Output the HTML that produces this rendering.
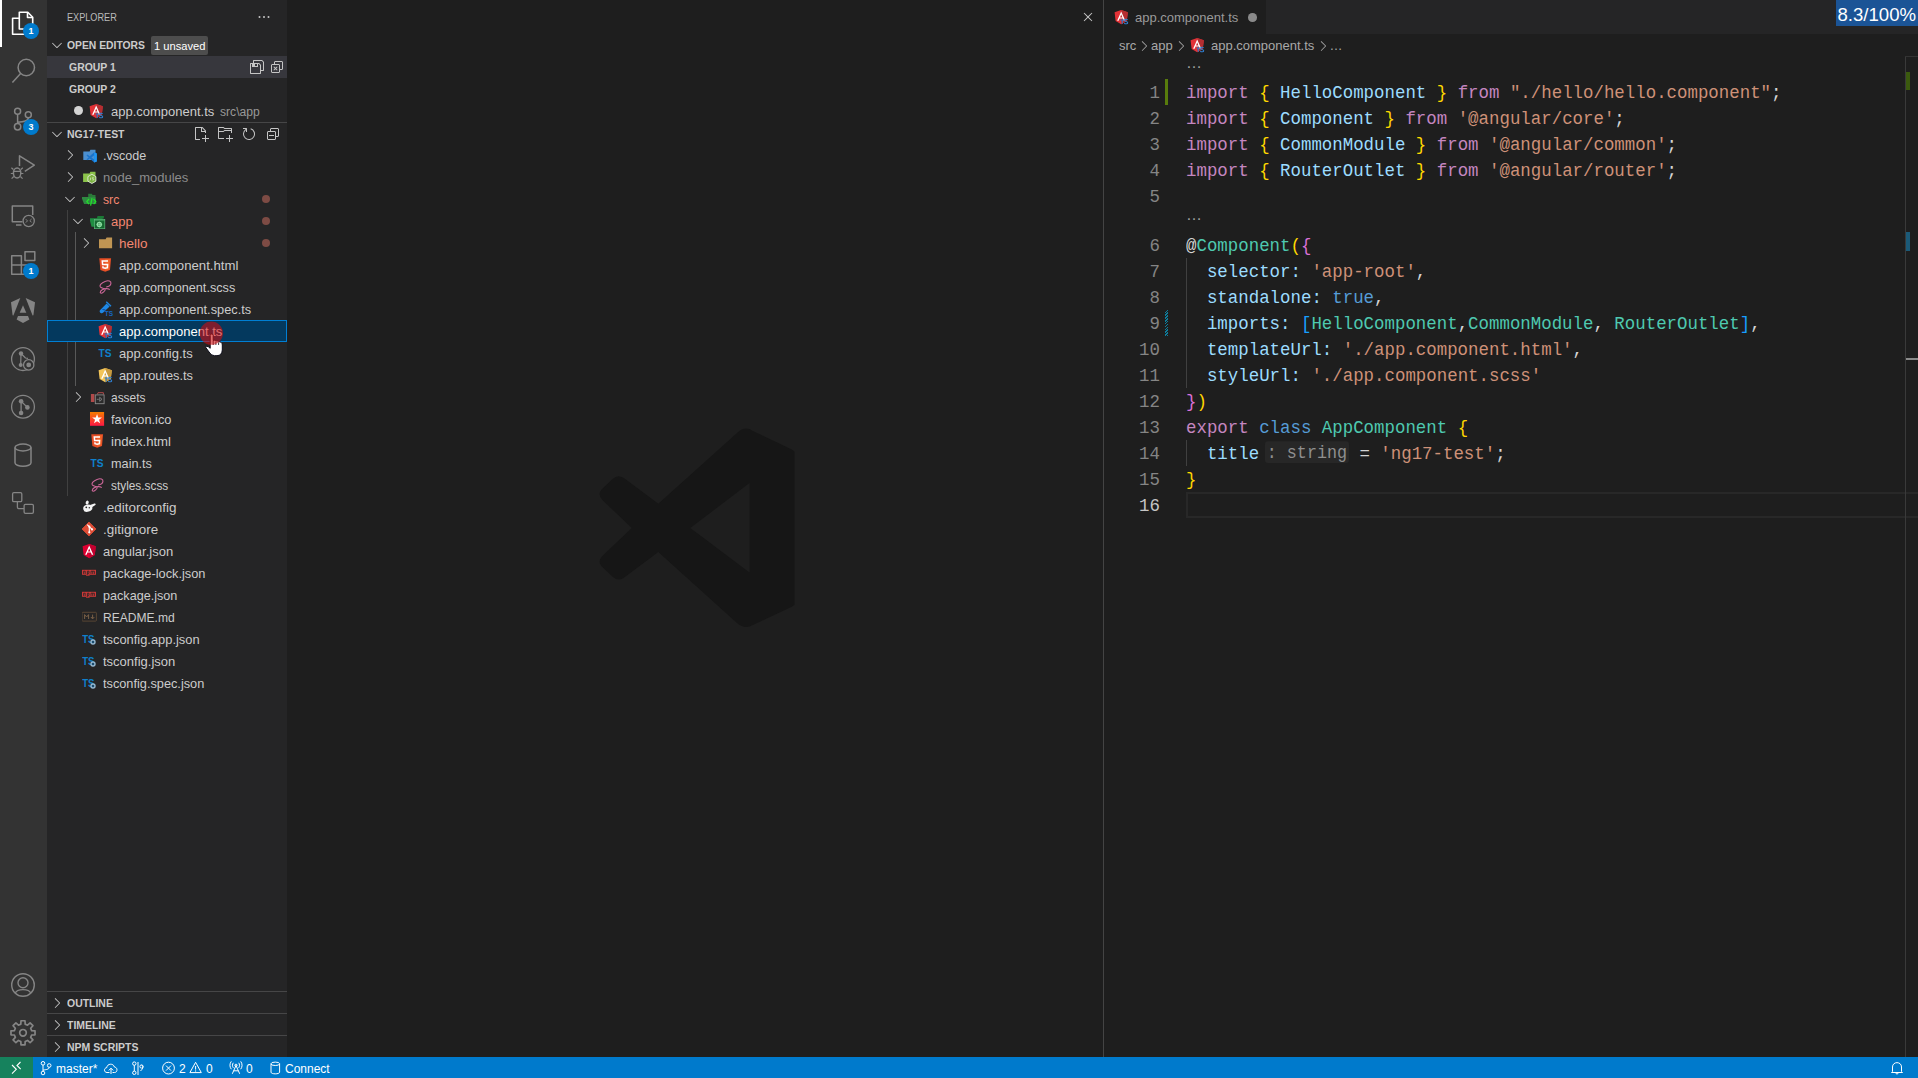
<!DOCTYPE html>
<html>
<head>
<meta charset="utf-8">
<title>app.component.ts - ng17-test - Visual Studio Code</title>
<style>
*{box-sizing:border-box;margin:0;padding:0}
html,body{width:1918px;height:1078px;overflow:hidden;background:#1e1e1e;font-family:"Liberation Sans",sans-serif;font-size:13px;color:#cccccc}
.abs{position:absolute}
#act{position:absolute;left:0;top:0;width:47px;height:1057px;background:#333333}
#side{position:absolute;left:47px;top:0;width:240px;height:1057px;background:#252526;overflow:hidden}
#g1{position:absolute;left:287px;top:0;width:816px;height:1057px;background:#1e1e1e}
#gsep{position:absolute;left:1103px;top:0;width:1px;height:1057px;background:#444444}
#g2{position:absolute;left:1104px;top:0;width:814px;height:1057px;background:#1e1e1e;overflow:hidden}
#status{position:absolute;left:0;top:1057px;width:1918px;height:21px;background:#007acc;color:#fff;font-size:12px}
/* sidebar */
.t{position:absolute;white-space:pre;transform-origin:0 50%;line-height:22px;height:22px}
.hdr{font-size:11px;font-weight:700;color:#cccccc}
.row{position:absolute;left:1px;width:239px;height:22px}
.lbl{position:absolute;top:0;line-height:24px;height:22px;white-space:pre;font-size:13px;color:#cccccc}
.red{color:#f48771}
.ic{position:absolute;top:3px;width:16px;height:16px}
.tw{position:absolute;top:3px;width:16px;height:16px}
.dot{position:absolute;left:213.7px;top:6.7px;width:8.6px;height:8.6px;border-radius:50%;background:#7d4b44}
/* code */
.ln{position:absolute;left:0;width:56px;text-align:right;font-family:"Liberation Mono",monospace;font-size:17.41px;line-height:28px;height:26px;color:#858585;white-space:pre}
.cl{position:absolute;left:82px;font-family:"Liberation Mono",monospace;font-size:17.41px;line-height:28px;height:26px;color:#d4d4d4;white-space:pre}
.cl,.ln{transform:scaleY(1.08);transform-origin:0 10px}
.k{color:#c586c0}.b1{color:#ffd700}.b2{color:#da70d6}.b3{color:#179fff}.v{color:#9cdcfe}.s{color:#ce9178}.c{color:#4ec9b0}.kw{color:#569cd6}
.bc{line-height:22px;height:22px;font-size:13px;color:#a9a9a9;white-space:pre}
.lens{line-height:22px;height:22px;font-family:"Liberation Sans",sans-serif;font-size:16px;color:#a0a0a0;white-space:pre}
.hint{display:inline-block;font-size:16.7px;line-height:21px;height:20px;vertical-align:top;margin:2px 0 0 5.7px;padding:0 2px;background:#272727;color:#8f8f8f;border-radius:3px}
.badge{position:absolute;width:16px;height:16px;border-radius:8px;background:#007acc;color:#fff;font-size:9px;font-weight:700;line-height:16px;text-align:center}
.st{top:0;line-height:25px;height:21px;font-size:12px;color:#fff;white-space:pre}
.dim{color:#8c8c8c}.white{color:#ffffff}
</style>
</head>
<body>
<svg width="0" height="0" style="position:absolute">
<defs>
<linearGradient id="gfav" x1="0" y1="0" x2="0" y2="1"><stop offset="0" stop-color="#f57c00"/><stop offset="1" stop-color="#ff1744"/></linearGradient>
<path id="chev-r" d="M10.072 8.024L5.715 3.667l.618-.62L11 7.716v.618L6.333 13l-.618-.619 4.357-4.357z" stroke="none"/>
<path id="chev-d" d="M7.976 10.072l4.357-4.357.62.618L8.284 11h-.618L3 6.333l.619-.618 4.357 4.357z" stroke="none"/>
<!-- action icons -->
<path id="a-saveall" fill="#c5c5c5" d="M14.85 2.65l-1.5-1.5L13 1H4.48l-.5.5V4H1.5l-.5.5v10l.5.5h10l.5-.5V12h2.5l.5-.5V3l-.15-.35zM11 14H2V5h1v3.07h6V5h.79L11 6.21V14zM6 7V5h2v2H6zm8 4h-2V6l-.15-.35-1.5-1.5L10 4H5V2h7.81l1.19 1.21V11z"/>
<path id="a-closeall" fill="#c5c5c5" fill-rule="evenodd" d="M8.621 8.086l-.707-.707L6.5 8.793 5.086 7.379l-.707.707L5.793 9.500l-1.414 1.414.707.707L6.5 10.207l1.414 1.414.707-.707L7.207 9.500l1.414-1.414z M5 3l1-1h7l1 1v7l-1 1h-2v2l-1 1H3l-1-1V6l1-1h2V3zm1 2h4l1 1v4h2V3H6v2zm4 1H3v7h7V6z"/>
<path id="a-newfile" fill="#c5c5c5" fill-rule="evenodd" d="M9.5 1.100l3.400 3.500.100.400v2h-1V6H8V2H3v11h4v1H2.500l-.500-.500v-12l.500-.500h6.700l.300.100zM9 2v3h2.900L9 2zm4 14h-1v-3H9v-1h3V9h1v3h3v1h-3v3z"/>
<path id="a-newfolder" fill="#c5c5c5" fill-rule="evenodd" d="M14.500 2H7.710l-.850-.850L6.510 1h-5l-.500.500v11l.500.500H7v-1H1.990V6h4.490l.350-.150.860-.860H14v1.500l-.001.510h1.011V2.500L14.500 2zm-.510 2h-6.500l-.350.150-.860.860H2v-3h4.290l.850.850.360.150H14l-.010.990zM13 16h-1v-3H9v-1h3V9h1v3h3v1h-3v3z"/>
<path id="a-refresh" fill="#c5c5c5" fill-rule="evenodd" d="M4.681 3H2V2h3.500l.500.500V6H5V4a5 5 0 1 0 4.530-.761l.302-.954A6 6 0 1 1 4.681 3z"/>
<path id="a-collapse" fill="#c5c5c5" fill-rule="evenodd" d="M9 9H4v1h5V9z M5 3l1-1h7l1 1v7l-1 1h-2v2l-1 1H3l-1-1V6l1-1h2V3zm1 2h4l1 1v4h2V3H6v2zm4 1H3v7h7V6z"/>
<!-- file icons -->
<g id="shield-r"><path d="M7.200 0.900 L0.600 3.200 L1.600 11.900 L7.200 15.300 L12.800 11.900 L13.800 3.200 Z" fill="#dd0031"/><path d="M7.200 0.900 L7.200 15.300 L12.800 11.900 L13.800 3.200 Z" fill="#c3002f"/></g>
<path id="shield-a" d="M7.200 2.500 L3.100 11.700 L4.650 11.700 L5.500 9.600 L8.900 9.600 L9.750 11.700 L11.300 11.700 Z M7.200 5.600 L8.400 8.400 L6.000 8.400 Z" fill="#ffffff" fill-rule="evenodd"/>
<g id="ts-sub" fill="none" stroke="#2f7fd0" stroke-width="1.100"><path d="M6.600 11 L9.800 11 M8.200 11 L8.200 14.800"/><path d="M13.600 10.900 C12.800 9.900 10.600 10 10.600 11.300 C10.600 12.700 13.700 12.200 13.700 13.700 C13.700 15.100 11.200 15.100 10.300 14.100"/></g>
<g id="i-angts"><path d="M7.200 0.900 L0.600 3.200 L1.600 11.900 L7.200 15.300 L12.800 11.900 L13.800 3.200 Z" fill="#e23237"/><path d="M7.200 0.900 L7.200 15.300 L12.800 11.900 L13.800 3.200 Z" fill="#b52e31"/><use href="#shield-a"/><use href="#ts-sub"/></g>
<g id="i-ang"><use href="#shield-r"/><use href="#shield-a"/></g>
<g id="i-route"><path d="M7.200 0.900 L0.600 3.200 L1.600 11.900 L7.200 15.300 L12.800 11.900 L13.800 3.200 Z" fill="#f3c558"/><path d="M7.200 0.900 L7.200 15.300 L12.800 11.900 L13.800 3.200 Z" fill="#c99a3c"/><use href="#shield-a"/><use href="#ts-sub"/></g>
<g id="i-ts"><text x="0.500" y="11.900" font-family="Liberation Sans" font-weight="700" font-size="11" fill="#0f80cc" textLength="13" lengthAdjust="spacingAndGlyphs">TS</text></g>
<g id="i-tsconf"><text x="0.200" y="11.900" font-family="Liberation Sans" font-weight="700" font-size="11" fill="#0f80cc" textLength="12.300" lengthAdjust="spacingAndGlyphs">TS</text><circle cx="11" cy="11" r="2" fill="#252526" stroke="#93b8d2" stroke-width="1.400"/><circle cx="11" cy="11" r="0.800" fill="#0f80cc"/></g>
<g id="i-folder"><path d="M1 4.300 L7.600 4.300 L8.600 2.500 L14.100 2.500 L14.100 13.200 L1 13.200 Z" fill="#c09553"/></g>
<g id="i-vscode"><path d="M1.300 4.400 L7.600 4.400 L8.400 2.700 L13.500 2.700 L13.500 12.900 L1.300 12.900 Z" fill="#4c8fcf"/><path d="M12.200 5.200 L14.800 6.400 L14.800 14.400 L12.200 15.600 L7.700 11.500 L5.500 13.200 L4.500 12.300 L6.700 10.400 L4.500 8.500 L5.500 7.600 L7.700 9.300 Z M12.200 8.300 L9.400 10.400 L12.200 12.500 Z" fill="#1a73cc" fill-rule="evenodd"/><path d="M12.200 5.200 L14.800 6.400 L14.800 14.400 L12.200 15.600 Z" fill="#2196f3"/></g>
<g id="i-node"><path d="M1.100 4.400 L7.600 4.400 L8.400 2.750 L13.500 2.750 L13.500 13 L1.100 13 Z" fill="#8bc34a"/><path d="M9.90 5.30 L13.88 7.60 L13.88 12.20 L9.90 14.50 L5.92 12.20 L5.92 7.60 Z" fill="#7cb342" stroke="#e4ebdc" stroke-width="0.900"/><path d="M8.500 8.600 L8.500 10.900 L7.600 11.300 M10.300 11 L11.800 11 L11.800 10 L10.300 9.700 L10.300 8.700 L11.800 8.700" fill="none" stroke="#cfe3b4" stroke-width="0.800"/></g>
<g id="i-src"><path d="M6.200 2.800 L9.800 2.800 L10.600 4 L13.500 4 L13.500 6.400 L6.200 6.400 Z" fill="#2a7a38"/><path d="M-0.700 6.100 L13.500 6.100 L14.400 13 L2.100 13 Z" fill="#2f8a41"/><path d="M7 8 L4.800 10.600 L7 13.200 M11.600 8 L13.800 10.600 L11.600 13.200 M10 7.200 L8.600 14.600" fill="none" stroke="#22e02a" stroke-width="1.200"/></g>
<g id="i-app"><path d="M7.500 2.900 L13.900 2.900 L13.900 5.600 L6.800 5.600 Z" fill="#1b7a35"/><path d="M-0.600 5.300 L12.600 5.300 L13.300 13.700 L1.500 13.700 Z" fill="#1f8f42"/><rect x="4.400" y="6.500" width="10.400" height="9.200" fill="#14672f" stroke="#5fba7d" stroke-width="0.700"/><path d="M4.400 7.600 L14.800 7.600" stroke="#5fba7d" stroke-width="0.500"/><circle cx="9.300" cy="11.500" r="2" fill="none" stroke="#8fe0a5" stroke-width="1.300"/><path d="M9.300 8.600 L9.300 14.400 M6.400 11.500 L12.200 11.500" stroke="#8fe0a5" stroke-width="0.700"/></g>
<g id="i-assets"><path d="M0.900 5 L0.900 13 L4.400 13 L4.400 5 Z" fill="#b04a4a"/><path d="M7.400 5.400 L8 3.700 L13.400 3.700 L13.400 5.600" fill="none" stroke="#b04a4a" stroke-width="1"/><rect x="5.300" y="5.900" width="8.800" height="8.800" fill="#2b2b2b" stroke="#8a8a8a" stroke-width="0.900"/><path d="M6.800 10.300 L8.800 10.300 M9.700 8.300 L12 10.300 L9.700 12.300 Z" fill="none" stroke="#9a9a9a" stroke-width="0.700"/></g>
<g id="i-html"><path d="M1.300 1.300 L13.100 1.300 L12 13 L7.200 14.800 L2.400 13 Z" fill="#e44d26"/><path d="M7.200 2.300 L12 2.300 L11.100 12.200 L7.200 13.700 Z" fill="#f16529"/><path d="M10 4 L4.300 4 L4.600 7.600 L9.600 7.600 L9.400 10.600 L7.200 11.300 L5 10.600 L4.900 9.300" fill="none" stroke="#ffffff" stroke-width="1.500"/></g>
<g id="i-scss"><path d="M8.200 8 C10.400 7.700 12.600 6.300 12.900 4.600 C13.400 2.200 10.400 1 7.600 2.200 C4.600 3.400 1.400 5.800 2.200 7.800 C2.900 9.400 6 9 7.200 10.200 C8 11.200 6.200 12.200 5 13.400 C3.900 14.600 2.200 14.600 2.300 13.200 C2.500 11.400 5.400 9.800 8 9.600 C9.800 9.500 11.400 9.800 11.600 10.800" fill="none" stroke="#cd6799" stroke-width="1.100"/></g>
<g id="i-spec"><path d="M8.300 0.800 L13 5.300" stroke="#1e88e5" stroke-width="1.300" fill="none"/><path d="M8.600 2.400 L11.600 5.400 L5 11.800 C3.600 13.200 0.400 11 2.200 8.900 Z" fill="#1e88e5"/><path d="M4.500 8.500 L7.500 9" stroke="#0d47a1" stroke-width="1" fill="none"/><text x="6.800" y="15" font-family="Liberation Sans" font-weight="700" font-size="6.500" fill="#1565c0">TS</text></g>
<g id="i-fav"><rect x="0" y="1" width="14.100" height="13.800" fill="url(#gfav)"/><path d="M7.05 2.90 L8.28 6.40 L12.00 6.49 L9.05 8.75 L10.11 12.31 L7.05 10.20 L3.99 12.31 L5.05 8.75 L2.10 6.49 L5.82 6.40 Z" fill="#ffffff"/></g>
<g id="i-editorconfig" fill="#f4f4f4"><ellipse cx="5.800" cy="9.200" rx="4.600" ry="3.500" transform="rotate(-15 5.800 9.200)"/><path d="M8 6 L12.400 4.600 C13.800 4.300 14.200 5.600 13 6.300 L9.600 8.600 Z"/><ellipse cx="5.200" cy="3.600" rx="1.500" ry="2.100" transform="rotate(20 5.200 3.600)"/><circle cx="4.300" cy="8.300" r="0.900" fill="#252526"/><circle cx="7.300" cy="8.700" r="0.700" fill="#252526"/></g>
<g id="i-git"><path d="M7 1 L14 8 L7 15 L0 8 Z" fill="#dd4c35" stroke="#dd4c35" stroke-width="0.800" stroke-linejoin="round"/><path d="M5.200 3.600 L7.300 5.700 L7.300 11.500 M7.300 5.700 L10 8.400" fill="none" stroke="#ffffff" stroke-width="1.100"/><circle cx="7.300" cy="5.700" r="1.100" fill="#fff"/><circle cx="7.300" cy="11.300" r="1.100" fill="#fff"/><circle cx="10" cy="8.400" r="1.100" fill="#fff"/></g>
<g id="i-npm"><rect x="0" y="4.800" width="14" height="5" fill="#cb3837"/><rect x="4" y="9.800" width="3.600" height="0.900" fill="#cb3837"/><path d="M1.600 8.900 L1.600 6.200 L3.200 6.200 L3.200 8.900 M5.400 9.800 L5.400 6.200 L7 6.200 L7 8.300 L5.400 8.300 M9 8.900 L9 6.200 L12.400 6.200 L12.400 8.900 M10.700 6.200 L10.700 8.900" fill="none" stroke="#252526" stroke-width="0.800"/></g>
<g id="i-md"><rect x="0" y="3.300" width="14.400" height="8.800" rx="0.800" fill="none" stroke="#5e4a36" stroke-width="0.900"/><path d="M2.600 10 L2.600 5.600 L4.600 8 L6.600 5.600 L6.600 10 M10.600 5.600 L10.600 9.600 M8.900 8 L10.600 9.900 L12.300 8" fill="none" stroke="#7a6047" stroke-width="1"/></g>
<!-- status icons -->
<g id="s-branch" fill="none" stroke="#ffffff" stroke-width="1"><circle cx="5" cy="3.300" r="1.800"/><circle cx="5" cy="13" r="1.800"/><circle cx="11.200" cy="5.500" r="1.800"/><path d="M5 5.100 L5 11.200 M11.200 7.300 C11.200 9.500 8 9.500 5 10.200"/></g>
<g id="s-cloud" fill="none" stroke="#ffffff" stroke-width="1"><path d="M6.500 12.500 L4 12.500 C0.800 12.500 0.600 8 3.800 7.600 C4 3.400 10.600 3 11.400 7 C14.800 7.200 14.800 12.500 11.600 12.500 L9.500 12.500"/><path d="M8 14 L8 8.300 M5.800 10.400 L8 8.200 L10.200 10.400"/></g>
<g id="s-gitcompare" fill="none" stroke="#ffffff" stroke-width="1"><circle cx="4.300" cy="3.600" r="1.700"/><circle cx="4.300" cy="12.800" r="1.700"/><path d="M4.300 5.300 L4.300 11.100 M8 2 L8 15"/><path d="M11.500 5.300 C13.300 5.300 13.300 8 12 9.300 L10.500 11"/><circle cx="11.500" cy="6.500" r="1.600"/></g>
<g id="s-error" fill="none" stroke="#ffffff" stroke-width="1"><circle cx="8.500" cy="8.100" r="5.900"/><path d="M6 5.600 L11 10.600 M11 5.600 L6 10.600"/></g>
<g id="s-warn" fill="none" stroke="#ffffff" stroke-width="1"><path d="M7.600 2.300 L13.300 12.600 L1.900 12.600 Z"/><path d="M7.600 6 L7.600 9.600 M7.600 10.400 L7.600 11.600"/></g>
<g id="s-radio" fill="none" stroke="#ffffff" stroke-width="1"><path d="M4.300 13.800 L8 5.500 L11.700 13.800 M5.700 10.800 L10.300 10.800"/><circle cx="8" cy="5.300" r="1.100"/><path d="M5.300 2.800 C4.200 4.200 4.200 6.400 5.300 7.800 M10.700 2.800 C11.800 4.200 11.800 6.400 10.700 7.800 M3.300 1.400 C1.500 3.600 1.500 7 3.300 9.200 M12.700 1.400 C14.500 3.600 14.500 7 12.700 9.200"/></g>
<g id="s-db" fill="none" stroke="#ffffff" stroke-width="1"><ellipse cx="8.300" cy="3.800" rx="4.300" ry="1.700"/><path d="M4 3.800 L4 12.200 C4 14.400 12.600 14.400 12.600 12.200 L12.600 3.800"/></g>
<g id="s-bell" fill="none" stroke="#ffffff" stroke-width="1"><path d="M3.500 11.500 L3.500 7 C3.500 1.200 12.500 1.200 12.500 7 L12.500 11.500 L13.500 12.500 L2.500 12.500 Z"/><path d="M6.800 12.700 C6.800 14.500 9.200 14.500 9.200 12.700"/></g>
</defs>
</svg>
<div id="act">
  <div class="abs" style="left:0;top:0;width:1.6px;height:47px;background:#ffffff"></div>
  <svg class="abs" style="left:0;top:0" width="48" height="1057" viewBox="0 0 48 1057" fill="none" stroke="#858585" stroke-width="1.5" stroke-linejoin="round" stroke-linecap="butt">
    <!-- files (active) -->
    <g stroke="#ffffff" stroke-width="1.6">
      <path d="M19.3 29 L19.3 12.3 L27.8 12.3 L32.7 17.2 L32.7 29 Z"/>
      <path d="M27.5 12.5 L27.5 17.5 L32.5 17.5"/>
      <path d="M19 18.3 L12.6 18.3 L12.6 34.3 L25.8 34.3 L25.8 29.3"/>
    </g>
    <!-- search -->
    <circle cx="26.3" cy="67.5" r="8.2"/>
    <path d="M20.6 73.6 L12.4 82.6"/>
    <!-- scm -->
    <circle cx="17.6" cy="111.3" r="3"/>
    <circle cx="28.3" cy="114.8" r="3"/>
    <circle cx="17.6" cy="126.7" r="3.2"/>
    <path d="M17.6 114.3 L17.6 123.5 M28.3 117.8 C28.3 121.5 24 122 17.6 122.3"/>
    <!-- debug -->
    <path d="M19.5 166 L19.5 155.8 L34.3 165.2 L24.8 171.3"/>
    <ellipse cx="17.1" cy="173" rx="3.7" ry="5"/>
    <path d="M13.4 171.3 L20.8 171.3 M13.4 169.5 L11.4 167.8 M20.8 169.5 L22.8 167.8 M13.4 173.5 L10.8 173.5 M20.8 173.5 L23.4 173.5 M13.8 176.5 L11.6 178.6 M20.4 176.5 L22.6 178.6" stroke-width="1.2"/>
    <!-- remote explorer -->
    <path d="M22.5 221.7 L12.3 221.7 L12.3 205.9 L32.7 205.9 L32.7 215"/>
    <path d="M16 225 L21.5 225"/>
    <circle cx="28.7" cy="221" r="5.6" stroke-width="1.3"/>
    <path d="M25.8 219.2 L27.5 220.9 L25.8 222.6 M31.6 219 L29.9 220.7 L31.6 222.4" stroke-width="1"/>
    <!-- extensions -->
    <path d="M21.4 265 L21.4 255.7 L11.7 255.7 L11.7 274.3 L31 274.3 L31 265 L11.7 265 M21.4 265 L21.4 274.3"/>
    <rect x="25" y="251.8" width="9.8" height="8.8"/>
    <!-- angular -->
    <g stroke="none" fill="#858585">
      <path d="M11 302.300 L20.300 298 L13.400 315.600 L12.600 315.200 Z"/>
      <path d="M35 302.300 L25.700 298 L32.600 315.600 L33.400 315.200 Z"/>
      <path d="M23 305.200 L19.700 312.800 L26.300 312.800 Z"/>
      <path d="M18 316 L28 316 L29.400 319.400 L23 323 L16.600 319.400 Z"/>
    </g>
    <!-- git graph -->
    <circle cx="23" cy="359.1" r="11.4" stroke-width="1.3"/>
    <circle cx="21" cy="353.5" r="2.2" fill="#858585" stroke="none"/>
    <circle cx="20.7" cy="364.9" r="2" fill="#858585" stroke="none"/>
    <path d="M21 353.5 L20.7 364.9 M21 353.5 L25.5 358 L28 358.3" stroke-width="1.2"/>
    <circle cx="28.7" cy="364.9" r="5.2" fill="#333333" stroke-width="1.3"/>
    <circle cx="28.7" cy="364.9" r="2.4" fill="#858585" stroke="none"/>
    <!-- git -->
    <circle cx="23" cy="406.7" r="11.4" stroke-width="1.3"/>
    <circle cx="21.1" cy="401.3" r="2.3" fill="#858585" stroke="none"/>
    <circle cx="21.1" cy="413" r="2.3" fill="#858585" stroke="none"/>
    <circle cx="27.4" cy="407.4" r="2.3" fill="#858585" stroke="none"/>
    <path d="M21.1 401.3 L21.1 413 M21.1 401.3 L27.4 407.4" stroke-width="1.3"/>
    <!-- database -->
    <ellipse cx="23" cy="447.5" rx="8" ry="3.4"/>
    <path d="M15 447.5 L15 462.8 A8 3.4 0 0 0 31 462.8 L31 447.5"/>
    <!-- squares -->
    <rect x="12.6" y="492.7" width="9.2" height="9" rx="1.3" stroke-width="1.3"/>
    <rect x="24.1" y="504.4" width="9.3" height="9" rx="1.3" stroke-width="1.3"/>
    <path d="M17.4 501.8 L17.4 507.3 Q17.4 508.7 18.8 508.7 L24 508.7" stroke-width="1.3"/>
    <!-- account -->
    <circle cx="23" cy="985" r="11.3" stroke-width="1.4"/>
    <circle cx="23" cy="982.7" r="5" stroke-width="1.4"/>
    <path d="M15.3 993 C17 988.5 29 988.5 30.7 993" stroke-width="1.4"/>
    <!-- gear -->
    <g transform="translate(23 1032.8)" stroke-width="1.7">
      <circle cx="0" cy="0" r="3.3"/>
      <path d="M-2.20 -8.62 L-2.00 -12.03 L2.00 -12.03 L2.20 -8.62 L4.54 -7.65 L7.09 -9.93 L9.93 -7.09 L7.65 -4.54 L8.62 -2.20 L12.03 -2.00 L12.03 2.00 L8.62 2.20 L7.65 4.54 L9.93 7.09 L7.09 9.93 L4.54 7.65 L2.20 8.62 L2.00 12.03 L-2.00 12.03 L-2.20 8.62 L-4.54 7.65 L-7.09 9.93 L-9.93 7.09 L-7.65 4.54 L-8.62 2.20 L-12.03 2.00 L-12.03 -2.00 L-8.62 -2.20 L-7.65 -4.54 L-9.93 -7.09 L-7.09 -9.93 L-4.54 -7.65 Z"/>
    </g>
  </svg>
  <div class="badge" style="left:23px;top:23px">1</div>
  <div class="badge" style="left:23px;top:119px">3</div>
  <div class="badge" style="left:23px;top:263px">1</div>
</div>
<div id="side"><div class="abs" style="left:1px;top:0;width:239px;height:1057px">
<div class="t" style="left:19px;top:6px;font-size:11px;color:#bbbbbb;transform:scaleX(0.83)">EXPLORER</div>
<svg class="abs" style="left:208px;top:9px" width="16" height="16" viewBox="0 0 16 16"><circle cx="3.5" cy="8" r="1" fill="#c5c5c5"/><circle cx="8" cy="8" r="1" fill="#c5c5c5"/><circle cx="12.5" cy="8" r="1" fill="#c5c5c5"/></svg>
<svg class="abs" style="left:1px;top:37px" width="16" height="16" viewBox="0 0 16 16"><use href="#chev-d" fill="#c5c5c5"/></svg>
<div class="t hdr" style="left:19px;top:34px;transform:scaleX(0.94)">OPEN EDITORS</div>
<div class="abs" style="left:103px;top:36px;width:57px;height:19px;background:#4d4d4d;border-radius:2px"></div>
<div class="t" style="left:106px;top:35px;font-size:11px;color:#ffffff;transform:scaleX(1.015)">1 unsaved</div>
<div class="abs" style="left:-1px;top:56px;width:240px;height:22px;background:#37373d"></div>
<div class="t hdr" style="left:21px;top:56px;transform:scaleX(0.95)">GROUP 1</div>
<svg class="abs" style="left:201px;top:59px" width="16" height="16" viewBox="0 0 16 16"><use href="#a-saveall"/></svg>
<svg class="abs" style="left:221px;top:59px" width="16" height="16" viewBox="0 0 16 16"><use href="#a-closeall"/></svg>
<div class="t hdr" style="left:21px;top:78px;transform:scaleX(0.95)">GROUP 2</div>
<div class="abs" style="left:26px;top:106px;width:9px;height:9px;border-radius:50%;background:#d4d4d4"></div>
<svg class="abs" style="left:41px;top:103px" width="16" height="16" viewBox="0 0 16 16"><use href="#i-angts"/></svg>
<div class="lbl" style="left:63px;top:100px">app.component.ts</div>
<div class="lbl" style="left:172px;top:100px;font-size:12px;color:#999999;line-height:25px;transform:scaleX(1.01);transform-origin:0 50%">src\app</div>
<div class="abs" style="left:-1px;top:122px;width:240px;height:1px;background:#464647"></div>
<svg class="abs" style="left:1px;top:126px" width="16" height="16" viewBox="0 0 16 16"><use href="#chev-d" fill="#c5c5c5"/></svg>
<div class="t hdr" style="left:19px;top:123px;transform:scaleX(0.95)">NG17-TEST</div>
<svg class="abs" style="left:145px;top:126px" width="16" height="16" viewBox="0 0 16 16"><use href="#a-newfile"/></svg>
<svg class="abs" style="left:169px;top:126px" width="16" height="16" viewBox="0 0 16 16"><use href="#a-newfolder"/></svg>
<svg class="abs" style="left:193px;top:126px" width="16" height="16" viewBox="0 0 16 16"><use href="#a-refresh"/></svg>
<svg class="abs" style="left:217px;top:126px" width="16" height="16" viewBox="0 0 16 16"><use href="#a-collapse"/></svg>
<div class="abs" style="left:19px;top:210px;width:1px;height:286px;background:#404040"></div>
<div class="abs" style="left:27px;top:232px;width:1px;height:154px;background:#585858"></div>
</div>
<div class="row" style="top:144px"><svg class="tw" style="left:14px" viewBox="0 0 16 16"><use href="#chev-r" fill="#c5c5c5"/></svg><svg class="ic" style="left:34px" viewBox="0 0 16 16"><use href="#i-vscode"/></svg><div class="lbl " style="left:55px;transform:scaleX(0.966);transform-origin:0 50%">.vscode</div></div>
<div class="row" style="top:166px"><svg class="tw" style="left:14px" viewBox="0 0 16 16"><use href="#chev-r" fill="#c5c5c5"/></svg><svg class="ic" style="left:34px" viewBox="0 0 16 16"><use href="#i-node"/></svg><div class="lbl dim" style="left:55px">node_modules</div></div>
<div class="row" style="top:188px"><svg class="tw" style="left:14px" viewBox="0 0 16 16"><use href="#chev-d" fill="#c5c5c5"/></svg><svg class="ic" style="left:34px" viewBox="0 0 16 16"><use href="#i-src"/></svg><div class="lbl red" style="left:55px;transform:scaleX(0.94);transform-origin:0 50%">src</div><div class="dot"></div></div>
<div class="row" style="top:210px"><svg class="tw" style="left:22px" viewBox="0 0 16 16"><use href="#chev-d" fill="#c5c5c5"/></svg><svg class="ic" style="left:42px" viewBox="0 0 16 16"><use href="#i-app"/></svg><div class="lbl red" style="left:63px">app</div><div class="dot"></div></div>
<div class="row" style="top:232px"><svg class="tw" style="left:30px" viewBox="0 0 16 16"><use href="#chev-r" fill="#c5c5c5"/></svg><svg class="ic" style="left:50px" viewBox="0 0 16 16"><use href="#i-folder"/></svg><div class="lbl red" style="left:71px;transform:scaleX(1.037);transform-origin:0 50%">hello</div><div class="dot"></div></div>
<div class="row" style="top:254px"><svg class="ic" style="left:50px" viewBox="0 0 16 16"><use href="#i-html"/></svg><div class="lbl " style="left:71px;transform:scaleX(1.013);transform-origin:0 50%">app.component.html</div></div>
<div class="row" style="top:276px"><svg class="ic" style="left:50px" viewBox="0 0 16 16"><use href="#i-scss"/></svg><div class="lbl " style="left:71px;transform:scaleX(0.975);transform-origin:0 50%">app.component.scss</div></div>
<div class="row" style="top:298px"><svg class="ic" style="left:50px" viewBox="0 0 16 16"><use href="#i-spec"/></svg><div class="lbl " style="left:71px;transform:scaleX(0.983);transform-origin:0 50%">app.component.spec.ts</div></div>
<div class="abs" style="left:0;top:320px;width:240px;height:22px;background:#04395e;border:1px solid #007fd4"></div>
<div class="row" style="top:320px"><svg class="ic" style="left:50px" viewBox="0 0 16 16"><use href="#i-angts"/></svg><div class="lbl white" style="left:71px">app.component.ts</div></div>
<div class="row" style="top:342px"><svg class="ic" style="left:50px" viewBox="0 0 16 16"><use href="#i-ts"/></svg><div class="lbl " style="left:71px">app.config.ts</div></div>
<div class="row" style="top:364px"><svg class="ic" style="left:50px" viewBox="0 0 16 16"><use href="#i-route"/></svg><div class="lbl " style="left:71px;transform:scaleX(0.983);transform-origin:0 50%">app.routes.ts</div></div>
<div class="row" style="top:386px"><svg class="tw" style="left:22px" viewBox="0 0 16 16"><use href="#chev-r" fill="#c5c5c5"/></svg><svg class="ic" style="left:42px" viewBox="0 0 16 16"><use href="#i-assets"/></svg><div class="lbl " style="left:63px;transform:scaleX(0.918);transform-origin:0 50%">assets</div></div>
<div class="row" style="top:408px"><svg class="ic" style="left:42px" viewBox="0 0 16 16"><use href="#i-fav"/></svg><div class="lbl " style="left:63px;transform:scaleX(0.983);transform-origin:0 50%">favicon.ico</div></div>
<div class="row" style="top:430px"><svg class="ic" style="left:42px" viewBox="0 0 16 16"><use href="#i-html"/></svg><div class="lbl " style="left:63px;transform:scaleX(1.013);transform-origin:0 50%">index.html</div></div>
<div class="row" style="top:452px"><svg class="ic" style="left:42px" viewBox="0 0 16 16"><use href="#i-ts"/></svg><div class="lbl " style="left:63px;transform:scaleX(0.976);transform-origin:0 50%">main.ts</div></div>
<div class="row" style="top:474px"><svg class="ic" style="left:42px" viewBox="0 0 16 16"><use href="#i-scss"/></svg><div class="lbl " style="left:63px;transform:scaleX(0.911);transform-origin:0 50%">styles.scss</div></div>
<div class="row" style="top:496px"><svg class="ic" style="left:34px" viewBox="0 0 16 16"><use href="#i-editorconfig"/></svg><div class="lbl " style="left:55px;transform:scaleX(1.036);transform-origin:0 50%">.editorconfig</div></div>
<div class="row" style="top:518px"><svg class="ic" style="left:34px" viewBox="0 0 16 16"><use href="#i-git"/></svg><div class="lbl " style="left:55px;transform:scaleX(1.033);transform-origin:0 50%">.gitignore</div></div>
<div class="row" style="top:540px"><svg class="ic" style="left:34px" viewBox="0 0 16 16"><use href="#i-ang"/></svg><div class="lbl " style="left:55px">angular.json</div></div>
<div class="row" style="top:562px"><svg class="ic" style="left:34px" viewBox="0 0 16 16"><use href="#i-npm"/></svg><div class="lbl " style="left:55px;transform:scaleX(0.985);transform-origin:0 50%">package-lock.json</div></div>
<div class="row" style="top:584px"><svg class="ic" style="left:34px" viewBox="0 0 16 16"><use href="#i-npm"/></svg><div class="lbl " style="left:55px;transform:scaleX(0.97);transform-origin:0 50%">package.json</div></div>
<div class="row" style="top:606px"><svg class="ic" style="left:34px" viewBox="0 0 16 16"><use href="#i-md"/></svg><div class="lbl " style="left:55px;transform:scaleX(0.928);transform-origin:0 50%">README.md</div></div>
<div class="row" style="top:628px"><svg class="ic" style="left:34px" viewBox="0 0 16 16"><use href="#i-tsconf"/></svg><div class="lbl " style="left:55px;transform:scaleX(0.99);transform-origin:0 50%">tsconfig.app.json</div></div>
<div class="row" style="top:650px"><svg class="ic" style="left:34px" viewBox="0 0 16 16"><use href="#i-tsconf"/></svg><div class="lbl " style="left:55px">tsconfig.json</div></div>
<div class="row" style="top:672px"><svg class="ic" style="left:34px" viewBox="0 0 16 16"><use href="#i-tsconf"/></svg><div class="lbl " style="left:55px;transform:scaleX(0.98);transform-origin:0 50%">tsconfig.spec.json</div></div>
<div class="abs" style="left:1px;top:0;width:239px;height:1057px">
<div class="abs" style="left:-1px;top:991px;width:240px;height:1px;background:#464647"></div>
<svg class="abs" style="left:1px;top:995px" width="16" height="16" viewBox="0 0 16 16"><use href="#chev-r" fill="#c5c5c5"/></svg>
<div class="t hdr" style="left:19px;top:992px;transform:scaleX(0.95)">OUTLINE</div>
<div class="abs" style="left:-1px;top:1013px;width:240px;height:1px;background:#464647"></div>
<svg class="abs" style="left:1px;top:1017px" width="16" height="16" viewBox="0 0 16 16"><use href="#chev-r" fill="#c5c5c5"/></svg>
<div class="t hdr" style="left:19px;top:1014px;transform:scaleX(0.95)">TIMELINE</div>
<div class="abs" style="left:-1px;top:1035px;width:240px;height:1px;background:#464647"></div>
<svg class="abs" style="left:1px;top:1039px" width="16" height="16" viewBox="0 0 16 16"><use href="#chev-r" fill="#c5c5c5"/></svg>
<div class="t hdr" style="left:19px;top:1036px;transform:scaleX(0.95)">NPM SCRIPTS</div>
</div></div>
<div id="g1">
  <svg class="abs" style="left:311px;top:420px" width="200" height="216" viewBox="598 420 200 216"><path d="M737 432.900 Q745 425.500 752.900 430.900 L791.800 449.600 L794.600 451.800 L794.600 604.800 L791.800 606.800 L752.900 624.900 Q745 630 737 622.900 L658.300 552 L624.900 577 Q618.700 582.200 612.900 577 L601.800 566.400 Q597 561.400 602.600 555.800 L631.800 528 L602.600 500.200 Q597 494.600 601.800 489.300 L612.900 478.800 Q618.700 473.600 624.900 478.800 L658.300 503.800 Z M749.500 483 L749.500 572.500 L690.300 528 Z" fill="#161616" fill-rule="evenodd"/></svg>
  <svg class="abs" style="left:793px;top:9px" width="16" height="16" viewBox="0 0 16 16"><path d="M8 8.707l3.646 3.647.708-.707L8.707 8l3.647-3.646-.707-.708L8 7.293 4.354 3.646l-.707.708L7.293 8l-3.646 3.646.707.708L8 8.707z" fill="#c5c5c5"/></svg>
</div>
<div id="gsep"></div>
<div id="g2">
  <!-- tab bar -->
  <div class="abs" style="left:0;top:0;width:814px;height:34px;background:#252526"></div>
  <div class="abs" style="left:0;top:0;width:162px;height:34px;background:#1e1e1e"></div>
  <svg class="abs" style="left:10px;top:9px" width="16" height="16" viewBox="0 0 16 16"><use href="#i-angts"/></svg>
  <div class="abs" style="left:31px;top:0;line-height:35px;font-size:13px;color:#9a9a9a;white-space:pre">app.component.ts</div>
  <div class="abs" style="left:144.3px;top:13px;width:8.6px;height:8.6px;border-radius:50%;background:#8a8a8a"></div>
  <!-- zoom overlay -->
  <div class="abs" style="left:732px;top:0;width:82px;height:26px;background:#1b5496"></div>
  <div class="abs" id="zoomtxt" style="left:733.5px;top:0;line-height:30px;font-size:18.6px;color:#fff;white-space:pre">8.3/100%</div>
  <!-- breadcrumbs -->
  <div class="abs bc" style="left:15px;top:35px">src</div>
  <svg class="abs" style="left:32px;top:38px" width="16" height="16" viewBox="0 0 16 16"><use href="#chev-r" fill="#a0a0a0"/></svg>
  <div class="abs bc" style="left:47px;top:35px">app</div>
  <svg class="abs" style="left:69px;top:38px" width="16" height="16" viewBox="0 0 16 16"><use href="#chev-r" fill="#a0a0a0"/></svg>
  <svg class="abs" style="left:86px;top:37px" width="16" height="16" viewBox="0 0 16 16"><use href="#i-angts"/></svg>
  <div class="abs bc" style="left:107px;top:35px">app.component.ts</div>
  <svg class="abs" style="left:211px;top:38px" width="16" height="16" viewBox="0 0 16 16"><use href="#chev-r" fill="#a0a0a0"/></svg>
  <div class="abs bc" style="left:225.5px;top:35px">…</div>
  <!-- gutter decorations -->
  <div class="abs" style="left:61px;top:79px;width:3px;height:26px;background:#587c0c"></div>
  <div class="abs" style="left:61px;top:310px;width:3px;height:26px;background:repeating-linear-gradient(-45deg,#0c7d9d 0,#0c7d9d 1px,#1e1e1e 1px,#1e1e1e 2px)"></div>
  <!-- indent guides -->
  <div class="abs" style="left:82px;top:258px;width:1px;height:130px;background:#404040"></div>
  <div class="abs" style="left:82px;top:440px;width:1px;height:26px;background:#404040"></div>
  <!-- current line -->
  <div class="abs" style="left:82px;top:492px;width:732px;height:26px;border:2px solid #282828;border-right:none"></div>
  <!-- code lens -->
  <div class="abs lens" style="left:82px;top:52px">…</div>
  <div class="abs lens" style="left:82px;top:204px">…</div>
  <!-- line numbers -->
  <div class="ln" style="top:79px">1</div>
  <div class="ln" style="top:105px">2</div>
  <div class="ln" style="top:131px">3</div>
  <div class="ln" style="top:157px">4</div>
  <div class="ln" style="top:183px">5</div>
  <div class="ln" style="top:232px">6</div>
  <div class="ln" style="top:258px">7</div>
  <div class="ln" style="top:284px">8</div>
  <div class="ln" style="top:310px">9</div>
  <div class="ln" style="top:336px">10</div>
  <div class="ln" style="top:362px">11</div>
  <div class="ln" style="top:388px">12</div>
  <div class="ln" style="top:414px">13</div>
  <div class="ln" style="top:440px">14</div>
  <div class="ln" style="top:466px">15</div>
  <div class="ln" style="top:492px;color:#c6c6c6">16</div>
  <!-- code -->
  <div class="cl" style="top:79px"><span class="k">import</span> <span class="b1">{</span> <span class="v">HelloComponent</span> <span class="b1">}</span> <span class="k">from</span> <span class="s">"./hello/hello.component"</span>;</div>
  <div class="cl" style="top:105px"><span class="k">import</span> <span class="b1">{</span> <span class="v">Component</span> <span class="b1">}</span> <span class="k">from</span> <span class="s">'@angular/core'</span>;</div>
  <div class="cl" style="top:131px"><span class="k">import</span> <span class="b1">{</span> <span class="v">CommonModule</span> <span class="b1">}</span> <span class="k">from</span> <span class="s">'@angular/common'</span>;</div>
  <div class="cl" style="top:157px"><span class="k">import</span> <span class="b1">{</span> <span class="v">RouterOutlet</span> <span class="b1">}</span> <span class="k">from</span> <span class="s">'@angular/router'</span>;</div>
  <div class="cl" style="top:232px">@<span class="c">Component</span><span class="b1">(</span><span class="b2">{</span></div>
  <div class="cl" style="top:258px">  <span class="v">selector</span><span class="v">:</span> <span class="s">'app-root'</span>,</div>
  <div class="cl" style="top:284px">  <span class="v">standalone</span><span class="v">:</span> <span class="kw">true</span>,</div>
  <div class="cl" style="top:310px">  <span class="v">imports</span><span class="v">:</span> <span class="b3">[</span><span class="c">HelloComponent</span>,<span class="c">CommonModule</span>, <span class="c">RouterOutlet</span><span class="b3">]</span>,</div>
  <div class="cl" style="top:336px">  <span class="v">templateUrl</span><span class="v">:</span> <span class="s">'./app.component.html'</span>,</div>
  <div class="cl" style="top:362px">  <span class="v">styleUrl</span><span class="v">:</span> <span class="s">'./app.component.scss'</span></div>
  <div class="cl" style="top:388px"><span class="b2">}</span><span class="b1">)</span></div>
  <div class="cl" style="top:414px"><span class="k">export</span> <span class="kw">class</span> <span class="c">AppComponent</span> <span class="b1">{</span></div>
  <div class="cl" style="top:440px">  <span class="v">title</span><span class="hint">: string</span> = <span class="s">'ng17-test'</span>;</div>
  <div class="cl" style="top:466px"><span class="b1">}</span></div>
  <!-- overview ruler -->
  <div class="abs" style="left:801px;top:56px;width:1px;height:1001px;background:#3a3a3a"></div>
  <div class="abs" style="left:801px;top:56px;width:13px;height:1px;background:#333"></div>
  <div class="abs" style="left:802px;top:72px;width:4px;height:18px;background:#3b5a0e"></div>
  <div class="abs" style="left:802px;top:232px;width:4px;height:19px;background:#1b5a78"></div>
  <div class="abs" style="left:802px;top:358px;width:12px;height:2px;background:#8a8a8a"></div>
</div>
<svg class="abs" style="left:190px;top:315px;z-index:50" width="50" height="50" viewBox="190 315 50 50">
  <path d="M210.200 335.500 Q210.200 334 211.700 334 Q213.200 334 213.200 335.500 L213.200 340.600 Q214.700 339.600 215.900 341 Q217.400 340.200 218.500 341.800 Q220.200 341.300 221.300 342.600 Q222.300 343.200 222.300 345 L222.300 350 Q222 355.500 217 355.700 L214.500 355.700 Q211.500 355.500 209.800 353 L205.900 347.700 Q205.300 346.300 206.800 346.200 Q208.300 346.300 210.200 348.300 Z" fill="#ffffff" stroke="#0b0b18" stroke-width="1"/>
  <path d="M213.200 341 L213.200 345 M215.900 342 L215.900 345 M218.600 342.500 L218.600 345" stroke="#0b0b18" stroke-width="0.8" fill="none"/>
  <circle cx="211.300" cy="333.200" r="11.600" fill="rgba(206,14,17,0.6)"/>
</svg>
<div id="status">
  <div class="abs" style="left:0;top:0;width:33px;height:21px;background:#16825d"></div>
  <svg class="abs" style="left:9px;top:3px" width="16" height="16" viewBox="0 0 16 16"><path d="M3 5 L7.300 9.300 L3 13.600 M11.500 2 L8 5.500 L11.700 9.200" fill="none" stroke="#fff" stroke-width="1.1"/></svg>
  <svg class="abs" style="left:38px;top:3px" width="16" height="16" viewBox="0 0 16 16"><use href="#s-branch"/></svg>
  <div class="abs st" style="left:56px">master*</div>
  <svg class="abs" style="left:103px;top:3px" width="16" height="16" viewBox="0 0 16 16"><use href="#s-cloud"/></svg>
  <svg class="abs" style="left:130px;top:3px" width="16" height="16" viewBox="0 0 16 16"><use href="#s-gitcompare"/></svg>
  <svg class="abs" style="left:160px;top:3px" width="16" height="16" viewBox="0 0 16 16"><use href="#s-error"/></svg>
  <div class="abs st" style="left:179px">2</div>
  <svg class="abs" style="left:188px;top:3px" width="16" height="16" viewBox="0 0 16 16"><use href="#s-warn"/></svg>
  <div class="abs st" style="left:206px">0</div>
  <svg class="abs" style="left:228px;top:3px" width="16" height="16" viewBox="0 0 16 16"><use href="#s-radio"/></svg>
  <div class="abs st" style="left:246px">0</div>
  <svg class="abs" style="left:267px;top:3px" width="16" height="16" viewBox="0 0 16 16"><use href="#s-db"/></svg>
  <div class="abs st" style="left:285px">Connect</div>
  <svg class="abs" style="left:1889px;top:3px" width="16" height="16" viewBox="0 0 16 16"><use href="#s-bell"/></svg>
</div>
</body>
</html>
